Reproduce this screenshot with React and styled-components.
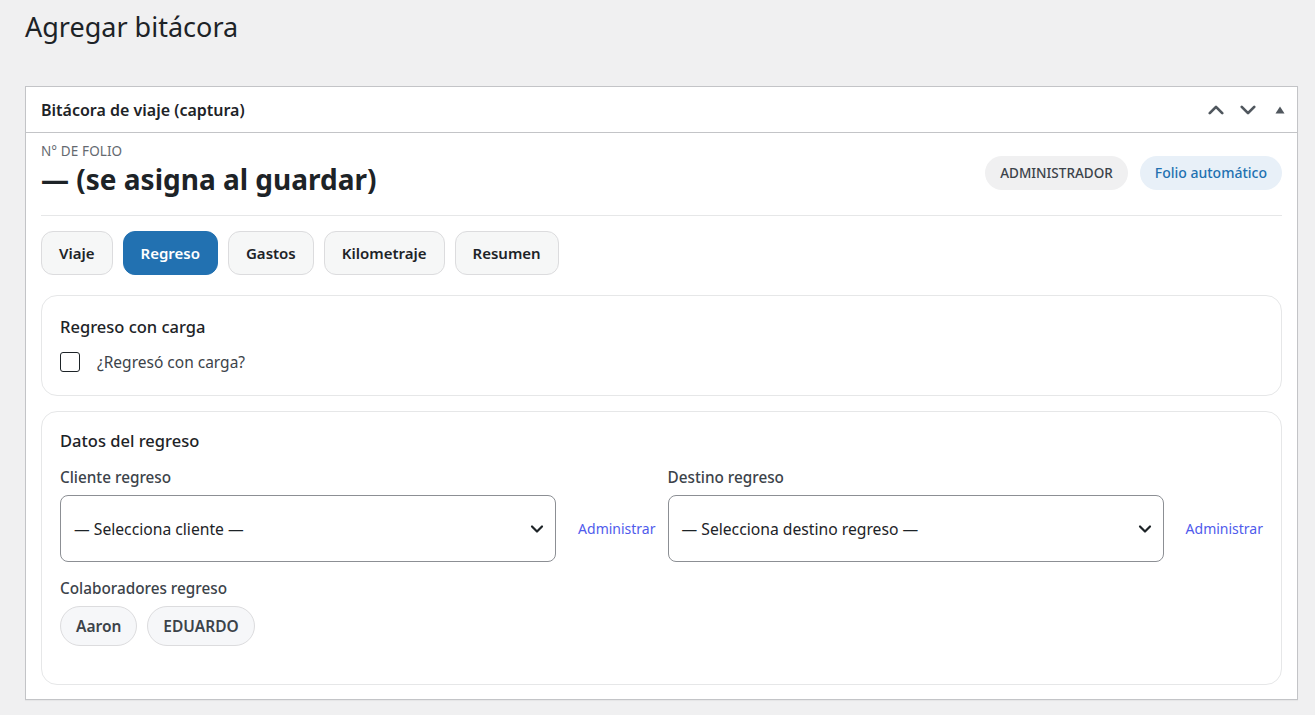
import React from "react";
import styled, { createGlobalStyle } from "styled-components";

const GlobalStyle = createGlobalStyle`
  html, body { margin: 0; padding: 0; }
  body {
    background: #f0f0f1;
    font-family: "Noto Sans", "Open Sans", sans-serif;
    color: #1d2327;
  }
  * { box-sizing: border-box; }
`;

const Page = styled.div`
  padding: 8px 17px 16px 25px;
`;

const PageTitle = styled.h1`
  margin: 0;
  font-size: 27px;
  font-weight: 400;
  line-height: 38px;
  color: #1d2327;
  height: 78px;
`;

const Postbox = styled.section`
  background: #fff;
  border: 1px solid #c3c4c7;
  box-shadow: 0 1px 1px rgba(0, 0, 0, 0.04);
`;

const PostboxHeader = styled.header`
  display: flex;
  align-items: center;
  justify-content: space-between;
  height: 46px;
  padding: 0 1px 0 15px;
  border-bottom: 1px solid #c3c4c7;
`;

const PostboxTitle = styled.h2`
  margin: 0;
  font-size: 16px;
  font-weight: 600;
  color: #1d2327;
`;

const HeaderActions = styled.div`
  display: flex;
  align-items: center;
`;

const HandleButton = styled.button`
  width: 32px;
  height: 36px;
  border: none;
  background: transparent;
  padding: 0;
  display: flex;
  align-items: center;
  justify-content: center;
  color: #50575e;
`;

const Inside = styled.div`
  padding: 10px 15px 14px 15px;
  display: flex;
  flex-direction: column;
`;

const FolioRow = styled.div`
  display: flex;
  justify-content: space-between;
  align-items: center;
  padding-bottom: 17px;
  border-bottom: 1px solid #e6e7e8;
`;

const FolioLabel = styled.div`
  font-size: 13.5px;
  color: #646970;
  text-transform: uppercase;
  letter-spacing: 0.1px;
  line-height: 16px;
`;

const FolioValue = styled.div`
  font-size: 28px;
  font-weight: 700;
  color: #1d2327;
  line-height: 38px;
  margin-top: 1px;
`;

const Badges = styled.div`
  display: flex;
  gap: 12px;
  margin-top: 4px;
`;

const Badge = styled.span`
  display: inline-flex;
  align-items: center;
  height: 34px;
  padding: 0 15px;
  border-radius: 17px;
  font-size: ${(p) => (p.$info ? "14px" : "13.5px")};
  font-weight: 500;
  background: ${(p) => (p.$info ? "#e8f0f8" : "#f0f0f1")};
  color: ${(p) => (p.$info ? "#2271b1" : "#3c434a")};
`;

const Tabs = styled.nav`
  display: flex;
  gap: 10px;
  margin-top: 15px;
`;

const Tab = styled.button`
  height: 44px;
  padding: 0 17px;
  border-radius: 12px;
  font-family: inherit;
  font-size: 15px;
  font-weight: 600;
  border: 1px solid ${(p) => (p.$active ? "#2271b1" : "#dcdcde")};
  background: ${(p) => (p.$active ? "#2271b1" : "#f6f7f7")};
  color: ${(p) => (p.$active ? "#fff" : "#1d2327")};
`;

const Card = styled.div`
  margin-top: ${(p) => p.$mt || 15}px;
  border: 1px solid #e6e7e8;
  border-radius: 16px;
  padding: ${(p) => p.$pad || "18px 18px 20px"};
`;

const CardTitle = styled.h3`
  margin: 0;
  font-size: 16.5px;
  font-weight: 500;
  line-height: 26px;
  color: #1d2327;
`;

const CheckRow = styled.label`
  display: flex;
  align-items: center;
  gap: 17px;
  margin-top: 11px;
  font-size: 15.5px;
  color: #3c434a;
`;

const CheckBox = styled.span`
  width: 20px;
  height: 20px;
  border: 1.5px solid #1d2327;
  border-radius: 3px;
  background: #fff;
  display: inline-block;
`;

const FieldGrid = styled.div`
  display: grid;
  grid-template-columns: 1fr 1fr;
  column-gap: 12px;
  margin-top: 13px;
`;

const Field = styled.div`
  display: flex;
  flex-direction: column;
`;

const FieldLabel = styled.div`
  font-size: 15.3px;
  font-weight: 500;
  color: #3c434a;
  line-height: 20px;
  margin-bottom: 8px;
  margin-top: ${(p) => p.$mt || 0}px;
`;

const SelectRow = styled.div`
  display: flex;
  align-items: center;
  gap: 22px;
`;

const SelectBox = styled.div`
  flex: 1;
  height: 67px;
  border: 1px solid #8c8f94;
  border-radius: 8px;
  display: flex;
  align-items: center;
  justify-content: space-between;
  padding: 0 10px 0 13px;
  font-size: 15.7px;
  color: #1d2327;
`;

const ManageLink = styled.a`
  font-size: 14px;
  color: #4f5bec;
  text-decoration: none;
`;

const Chips = styled.div`
  display: flex;
  gap: 10px;
  margin-top: 8px;
`;

const Chip = styled.span`
  display: inline-flex;
  align-items: center;
  height: 40px;
  padding: 0 15px;
  border-radius: 20px;
  border: 1px solid #dcdcde;
  background: #f6f7f9;
  font-size: 15.5px;
  font-weight: 600;
  color: #3c434a;
`;

const Chevron = ({ dir = "down", size = 16, stroke = 2.2, color = "currentColor" }) => (
  <svg width={size} height={size} viewBox="0 0 16 16" fill="none">
    <path
      d={dir === "down" ? "M3 5.5 L8 10.5 L13 5.5" : "M3 10.5 L8 5.5 L13 10.5"}
      stroke={color}
      strokeWidth={stroke}
      strokeLinecap="round"
      strokeLinejoin="round"
    />
  </svg>
);

const Triangle = () => (
  <svg width="10" height="8" viewBox="0 0 10 8">
    <path d="M5 0.5 L9.5 7.5 L0.5 7.5 Z" fill="#50575e" />
  </svg>
);

export default function App() {
  const tabs = ["Viaje", "Regreso", "Gastos", "Kilometraje", "Resumen"];
  return (
    <>
      <GlobalStyle />
      <Page>
        <PageTitle>Agregar bitácora</PageTitle>
        <Postbox>
          <PostboxHeader>
            <PostboxTitle>Bitácora de viaje (captura)</PostboxTitle>
            <HeaderActions>
              <HandleButton aria-label="Subir">
                <Chevron dir="up" size={20} stroke={2.2} />
              </HandleButton>
              <HandleButton aria-label="Bajar">
                <Chevron dir="down" size={20} stroke={2.2} />
              </HandleButton>
              <HandleButton aria-label="Contraer">
                <Triangle />
              </HandleButton>
            </HeaderActions>
          </PostboxHeader>
          <Inside>
            <FolioRow>
              <div>
                <FolioLabel>N° de folio</FolioLabel>
                <FolioValue>— (se asigna al guardar)</FolioValue>
              </div>
              <Badges>
                <Badge>ADMINISTRADOR</Badge>
                <Badge $info>Folio automático</Badge>
              </Badges>
            </FolioRow>
            <Tabs>
              {tabs.map((t) => (
                <Tab key={t} $active={t === "Regreso"}>
                  {t}
                </Tab>
              ))}
            </Tabs>
            <Card $mt={20} $pad="18px 18px 22px">
              <CardTitle>Regreso con carga</CardTitle>
              <CheckRow>
                <CheckBox />
                ¿Regresó con carga?
              </CheckRow>
            </Card>
            <Card $mt={15} $pad="16px 18px 38px">
              <CardTitle>Datos del regreso</CardTitle>
              <FieldGrid>
                <Field>
                  <FieldLabel>Cliente regreso</FieldLabel>
                  <SelectRow>
                    <SelectBox>
                      — Selecciona cliente —
                      <Chevron dir="down" size={16} stroke={2.2} color="#1d2327" />
                    </SelectBox>
                    <ManageLink href="#">Administrar</ManageLink>
                  </SelectRow>
                </Field>
                <Field>
                  <FieldLabel>Destino regreso</FieldLabel>
                  <SelectRow>
                    <SelectBox>
                      — Selecciona destino regreso —
                      <Chevron dir="down" size={16} stroke={2.2} color="#1d2327" />
                    </SelectBox>
                    <ManageLink href="#">Administrar</ManageLink>
                  </SelectRow>
                </Field>
              </FieldGrid>
              <FieldLabel $mt={16}>Colaboradores regreso</FieldLabel>
              <Chips>
                <Chip>Aaron</Chip>
                <Chip>EDUARDO</Chip>
              </Chips>
            </Card>
          </Inside>
        </Postbox>
      </Page>
    </>
  );
}
